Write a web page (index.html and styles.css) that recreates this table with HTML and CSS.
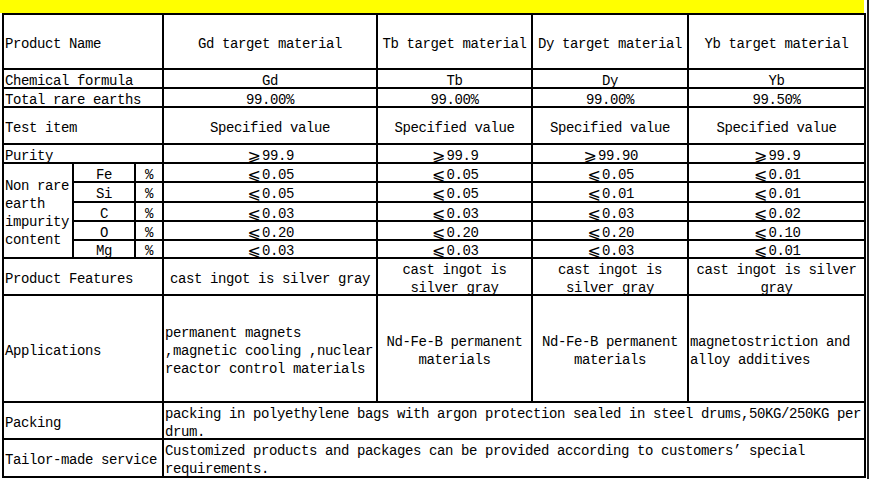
FILE: index.html
```html
<!DOCTYPE html>
<html lang="en">
<head>
<meta charset="utf-8">
<title>Rare earth target materials</title>
<link rel="stylesheet" href="styles.css">
</head>
<body>
<div class="page">
  <div class="main">
    <div class="band"></div>
    <div class="sheet">
      <div class="c l s3">Product Name</div>
      <div class="c">Gd target material</div>
      <div class="c">Tb target material</div>
      <div class="c">Dy target material</div>
      <div class="c">Yb target material</div>

      <div class="c l s3">Chemical formula</div>
      <div class="c">Gd</div>
      <div class="c">Tb</div>
      <div class="c">Dy</div>
      <div class="c">Yb</div>

      <div class="c l s3">Total rare earths</div>
      <div class="c">99.00%</div>
      <div class="c">99.00%</div>
      <div class="c">99.00%</div>
      <div class="c">99.50%</div>

      <div class="c l s3">Test item</div>
      <div class="c">Specified value</div>
      <div class="c">Specified value</div>
      <div class="c">Specified value</div>
      <div class="c">Specified value</div>

      <div class="c l s3">Purity</div>
      <div class="c"><span class="sym">⩾</span>99.9</div>
      <div class="c"><span class="sym">⩾</span>99.9</div>
      <div class="c"><span class="sym">⩾</span>99.90</div>
      <div class="c"><span class="sym">⩾</span>99.9</div>

      <div class="c l r5">Non rare earth impurity content</div>
      <div class="c">Fe</div>
      <div class="c">%</div>
      <div class="c"><span class="sym">⩽</span>0.05</div>
      <div class="c"><span class="sym">⩽</span>0.05</div>
      <div class="c"><span class="sym">⩽</span>0.05</div>
      <div class="c"><span class="sym">⩽</span>0.01</div>

      <div class="c">Si</div>
      <div class="c">%</div>
      <div class="c"><span class="sym">⩽</span>0.05</div>
      <div class="c"><span class="sym">⩽</span>0.05</div>
      <div class="c"><span class="sym">⩽</span>0.01</div>
      <div class="c"><span class="sym">⩽</span>0.01</div>

      <div class="c">C</div>
      <div class="c">%</div>
      <div class="c"><span class="sym">⩽</span>0.03</div>
      <div class="c"><span class="sym">⩽</span>0.03</div>
      <div class="c"><span class="sym">⩽</span>0.03</div>
      <div class="c"><span class="sym">⩽</span>0.02</div>

      <div class="c">O</div>
      <div class="c">%</div>
      <div class="c"><span class="sym">⩽</span>0.20</div>
      <div class="c"><span class="sym">⩽</span>0.20</div>
      <div class="c"><span class="sym">⩽</span>0.20</div>
      <div class="c"><span class="sym">⩽</span>0.10</div>

      <div class="c">Mg</div>
      <div class="c">%</div>
      <div class="c"><span class="sym">⩽</span>0.03</div>
      <div class="c"><span class="sym">⩽</span>0.03</div>
      <div class="c"><span class="sym">⩽</span>0.03</div>
      <div class="c"><span class="sym">⩽</span>0.01</div>

      <div class="c l s3">Product Features</div>
      <div class="c">cast ingot is silver gray</div>
      <div class="c">cast ingot is silver gray</div>
      <div class="c">cast ingot is silver gray</div>
      <div class="c">cast ingot is silver gray</div>

      <div class="c l s3">Applications</div>
      <div class="c l">permanent magnets ,magnetic cooling ,nuclear reactor control materials</div>
      <div class="c">Nd-Fe-B permanent materials</div>
      <div class="c">Nd-Fe-B permanent materials</div>
      <div class="c l">magnetostriction and alloy additives</div>

      <div class="c l s3">Packing</div>
      <div class="c l s4">packing in polyethylene bags with argon protection sealed in steel drums,50KG/250KG per drum.</div>

      <div class="c l s3">Tailor-made service</div>
      <div class="c l s4">Customized products and packages can be provided according to customers’ special requirements.</div>
    </div>
  </div>
  <div class="edge"></div>
</div>
</body>
</html>
```

FILE: styles.css
```css
* {
  box-sizing: border-box;
}

body {
  margin: 0;
  background: #ffffff;
  color: #000000;
  font-family: "Liberation Mono", "DejaVu Sans Mono", monospace;
  font-size: 14px;
  letter-spacing: -0.4px;
}

.page {
  display: flex;
  width: 869px;
  height: 479px;
}

.main {
  width: 866px;
}

.band {
  width: 864px;
  height: 13px;
  background: #ffff00;
}

.sheet {
  margin-left: 2px;
  width: 864px;
  display: grid;
  grid-template-columns: 68px 60px 26px 212px 153px 154px 175px;
  grid-template-rows: 53px 17px 17px 35px 17px 17px 18px 17px 17px 16px 35px 105px 35px 36px;
  gap: 2px;
  padding: 2px;
  background: #000000;
}

.c {
  background: #ffffff;
  display: flex;
  align-items: center;
  justify-content: center;
  text-align: center;
  line-height: 18px;
  padding: 4px 1px 0;
  min-height: 0;
}

.l {
  justify-content: flex-start;
  text-align: left;
}

.s3 {
  grid-column: span 3;
}

.s4 {
  grid-column: span 4;
}

.r5 {
  grid-row: span 5;
}

.sym {
  display: inline-block;
  width: 16px;
  text-align: center;
  font-family: "DejaVu Sans", sans-serif;
  font-size: 16px;
  letter-spacing: 0;
  line-height: 14px;
}

.edge {
  margin-left: 1px;
  width: 2px;
  background: #222222;
}
```
